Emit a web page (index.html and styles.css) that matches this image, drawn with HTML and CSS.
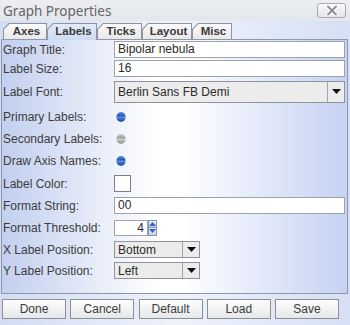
FILE: index.html
```html
<!DOCTYPE html>
<html>
<head>
<meta charset="utf-8">
<title>Graph Properties</title>
<link rel="stylesheet" href="styles.css">
</head>
<body>
<div class="window">
  <div class="titlebar">
    <span class="title">Graph Properties</span>
    <span class="close">
      <svg width="14" height="11" viewBox="0 0 14 11"><path d="M3 1.5 L11 9.5 M11 1.5 L3 9.5" stroke="#ffffff" stroke-width="4.5" stroke-linecap="round"/><path d="M3 1.5 L11 9.5 M11 1.5 L3 9.5" stroke="#8b8e95" stroke-width="2" stroke-linecap="round"/></svg>
    </span>
  </div>
  <div class="tabs">
    <div class="tab t-axes"><span>Axes</span></div>
    <div class="tab t-labels selected"><span>Labels</span></div>
    <div class="tab t-ticks"><span>Ticks</span></div>
    <div class="tab t-layout"><span>Layout</span></div>
    <div class="tab t-misc"><span>Misc</span></div>
  </div>
  <div class="panel">
    <div class="row r1"><span class="lbl">Graph Title:</span><span class="field">Bipolar nebula</span></div>
    <div class="row r2"><span class="lbl">Label Size:</span><span class="field">16</span></div>
    <div class="row r3"><span class="lbl">Label Font:</span>
      <span class="combo big"><span class="val">Berlin Sans FB Demi</span><span class="arrow"><svg width="9" height="5" viewBox="0 0 9 5"><path d="M0 0 H9 L4.5 5 Z" fill="#111"/></svg></span></span>
    </div>
    <div class="row r4"><span class="lbl">Primary Labels:</span>
      <svg class="radio" width="10" height="10" viewBox="0 0 10 10"><defs><linearGradient id="rb" x1="0" y1="0" x2="0" y2="1"><stop offset="0" stop-color="#5d8fe4"/><stop offset="0.42" stop-color="#1f52b8"/><stop offset="0.5" stop-color="#7ea5ea"/><stop offset="0.62" stop-color="#3a6ed3"/><stop offset="1" stop-color="#1d4fb2"/></linearGradient></defs><ellipse cx="5" cy="5" rx="4.6" ry="4.9" fill="url(#rb)"/></svg>
    </div>
    <div class="row r5"><span class="lbl">Secondary Labels:</span>
      <svg class="radio" width="10" height="10" viewBox="0 0 10 10"><defs><linearGradient id="rg" x1="0" y1="0" x2="0" y2="1"><stop offset="0" stop-color="#cfcfcf"/><stop offset="0.42" stop-color="#979797"/><stop offset="0.5" stop-color="#e4e4e4"/><stop offset="0.62" stop-color="#b4b4b4"/><stop offset="1" stop-color="#9a9a9a"/></linearGradient></defs><ellipse cx="5" cy="5" rx="4.6" ry="4.9" fill="url(#rg)"/></svg>
    </div>
    <div class="row r6"><span class="lbl">Draw Axis Names:</span>
      <svg class="radio" width="10" height="10" viewBox="0 0 10 10"><ellipse cx="5" cy="5" rx="4.6" ry="4.9" fill="url(#rb)"/></svg>
    </div>
    <div class="row r7"><span class="lbl">Label Color:</span><span class="swatch"></span></div>
    <div class="row r8"><span class="lbl">Format String:</span><span class="field">00</span></div>
    <div class="row r9"><span class="lbl">Format Threshold:</span>
      <span class="spinner"><span class="spin-val">4</span><span class="spin-btns">
        <span class="sb"><svg width="7" height="4" viewBox="0 0 7 4"><path d="M0 4 L3.5 0 L7 4 Z" fill="#2f62c4"/></svg></span>
        <span class="sb"><svg width="7" height="4" viewBox="0 0 7 4"><path d="M0 0 H7 L3.5 4 Z" fill="#2f62c4"/></svg></span>
      </span></span>
    </div>
    <div class="row r10"><span class="lbl">X Label Position:</span>
      <span class="combo small"><span class="val">Bottom</span><span class="arrow"><svg width="9" height="5" viewBox="0 0 9 5"><path d="M0 0 H9 L4.5 5 Z" fill="#111"/></svg></span></span>
    </div>
    <div class="row r11"><span class="lbl">Y Label Position:</span>
      <span class="combo small"><span class="val">Left</span><span class="arrow"><svg width="9" height="5" viewBox="0 0 9 5"><path d="M0 0 H9 L4.5 5 Z" fill="#111"/></svg></span></span>
    </div>
  </div>
  <div class="buttons">
    <span class="btn">Done</span>
    <span class="btn">Cancel</span>
    <span class="btn">Default</span>
    <span class="btn">Load</span>
    <span class="btn">Save</span>
  </div>
</div>
</body>
</html>
```

FILE: styles.css
```css
html, body {
  margin: 0;
  padding: 0;
}
body {
  width: 350px;
  height: 325px;
  overflow: hidden;
  font-family: "Liberation Sans", Arial, sans-serif;
  font-size: 12px;
  color: #3c3c3c;
}
.window {
  width: 350px;
  height: 325px;
  display: flex;
  flex-direction: column;
  background: linear-gradient(to right, #d2dcf3 0%, #eef2fb 50%, #d6dff5 100%);
}
.titlebar {
  height: 21px;
  flex: none;
  display: flex;
  align-items: center;
  justify-content: space-between;
  padding: 0 4px 0 3px;
  background: linear-gradient(#eceef2, #e3e6eb);
}
.title {
  font-family: "Noto Sans", "Open Sans", sans-serif;
  font-size: 13.5px;
  color: #666;
}
.close {
  width: 27px;
  height: 13px;
  border: 1px solid #a9acb3;
  border-radius: 3px;
  background: linear-gradient(#fbfbfc, #e2e4e8);
  display: flex;
  align-items: center;
  justify-content: center;
}
.tabs {
  height: 18px;
  flex: none;
  display: flex;
  align-items: flex-end;
  padding-left: 3px;
  position: relative;
  z-index: 1;
}
.tab {
  height: 16px;
  box-sizing: border-box;
  padding: 1px 1px 0 1px;
  background: #8e94a1;
  clip-path: polygon(6px 0, 100% 0, 100% 100%, 0 100%, 0 6px);
}
.tab > span {
  display: block;
  height: 100%;
  box-sizing: border-box;
  text-align: center;
  font-weight: bold;
  font-size: 11.5px;
  line-height: 15px;
  color: #3a3a3a;
  padding-left: 3px;
  background: linear-gradient(#fbfbfb, #e8e8e8);
  clip-path: polygon(5.5px 0, 100% 0, 100% 100%, 0 100%, 0 5.5px);
}
.tab.selected {
  height: 17px;
  margin-bottom: -1px;
}
.tab.selected > span {
  background: linear-gradient(#e2eaf8, #cddbf3);
}
.t-axes { width: 44px; }
.t-labels { width: 50px; }
.t-ticks { width: 45px; }
.t-layout { width: 50px; }
.t-misc { width: 40px; }

.panel {
  flex: none;
  width: 347px;
  height: 255px;
  box-sizing: border-box;
  margin-left: 1px;
  border: 1px solid #8e98ad;
  padding: 0 2px 0 1px;
  background: linear-gradient(to right, #c2cfef 0%, #ffffff 45%, #ffffff 52%, #c5d2f3 100%);
  display: flex;
  flex-direction: column;
}
.row {
  display: grid;
  grid-template-columns: 111px 1fr;
  align-items: center;
  flex: none;
}
.r1 { height: 19px; }
.r2 { height: 19px; }
.r3 { height: 27px; }
.r4 { height: 23px; }
.r5 { height: 22px; }
.r6 { height: 22px; }
.r7 { height: 23px; }
.r8 { height: 21px; }
.r9 { height: 23px; }
.r10 { height: 21px; }
.r11 { height: 21px; }
.lbl {
  white-space: nowrap;
  color: #3c3c3c;
}
.field {
  height: 17px;
  box-sizing: border-box;
  border: 1px solid #9da2ab;
  background: #fff;
  padding-left: 3px;
  line-height: 15px;
  color: #2a2a2a;
}
.combo {
  display: flex;
  box-sizing: border-box;
  border: 1px solid #8e939c;
  background: #ececec;
}
.combo .val {
  flex: 1;
  padding-left: 3px;
  display: flex;
  align-items: center;
  color: #2a2a2a;
}
.combo .arrow {
  width: 16px;
  border-left: 1px solid #a2a6ad;
  display: flex;
  align-items: center;
  justify-content: center;
}
.combo.big {
  height: 22px;
}
.combo.small {
  width: 86px;
  height: 17px;
}
.radio {
  margin-left: 2px;
  display: block;
}
.swatch {
  width: 17px;
  height: 17px;
  box-sizing: border-box;
  border: 1px solid #7c7f85;
  background: #fff;
}
.spinner {
  display: flex;
  height: 16px;
  width: 43px;
}
.spin-val {
  width: 34px;
  box-sizing: border-box;
  border: 1px solid #9da2ab;
  background: #fff;
  text-align: right;
  padding-right: 3px;
  line-height: 14px;
  color: #2a2a2a;
}
.spin-btns {
  width: 9px;
  display: flex;
  flex-direction: column;
}
.sb {
  flex: 1;
  box-sizing: border-box;
  border: 1px solid #8f96a3;
  background: linear-gradient(#e6eefb, #c4d4ef);
  display: flex;
  align-items: center;
  justify-content: center;
}
.sb + .sb {
  border-top: none;
}
.buttons {
  flex: none;
  display: flex;
  gap: 4.25px;
  padding: 5px 0 0 2px;
}
.btn {
  width: 64px;
  height: 20px;
  box-sizing: border-box;
  border: 1px solid #8c8f95;
  background: linear-gradient(#fdfdfd, #e6e7e9);
  display: flex;
  align-items: center;
  justify-content: center;
  color: #3c3c3c;
}
```
